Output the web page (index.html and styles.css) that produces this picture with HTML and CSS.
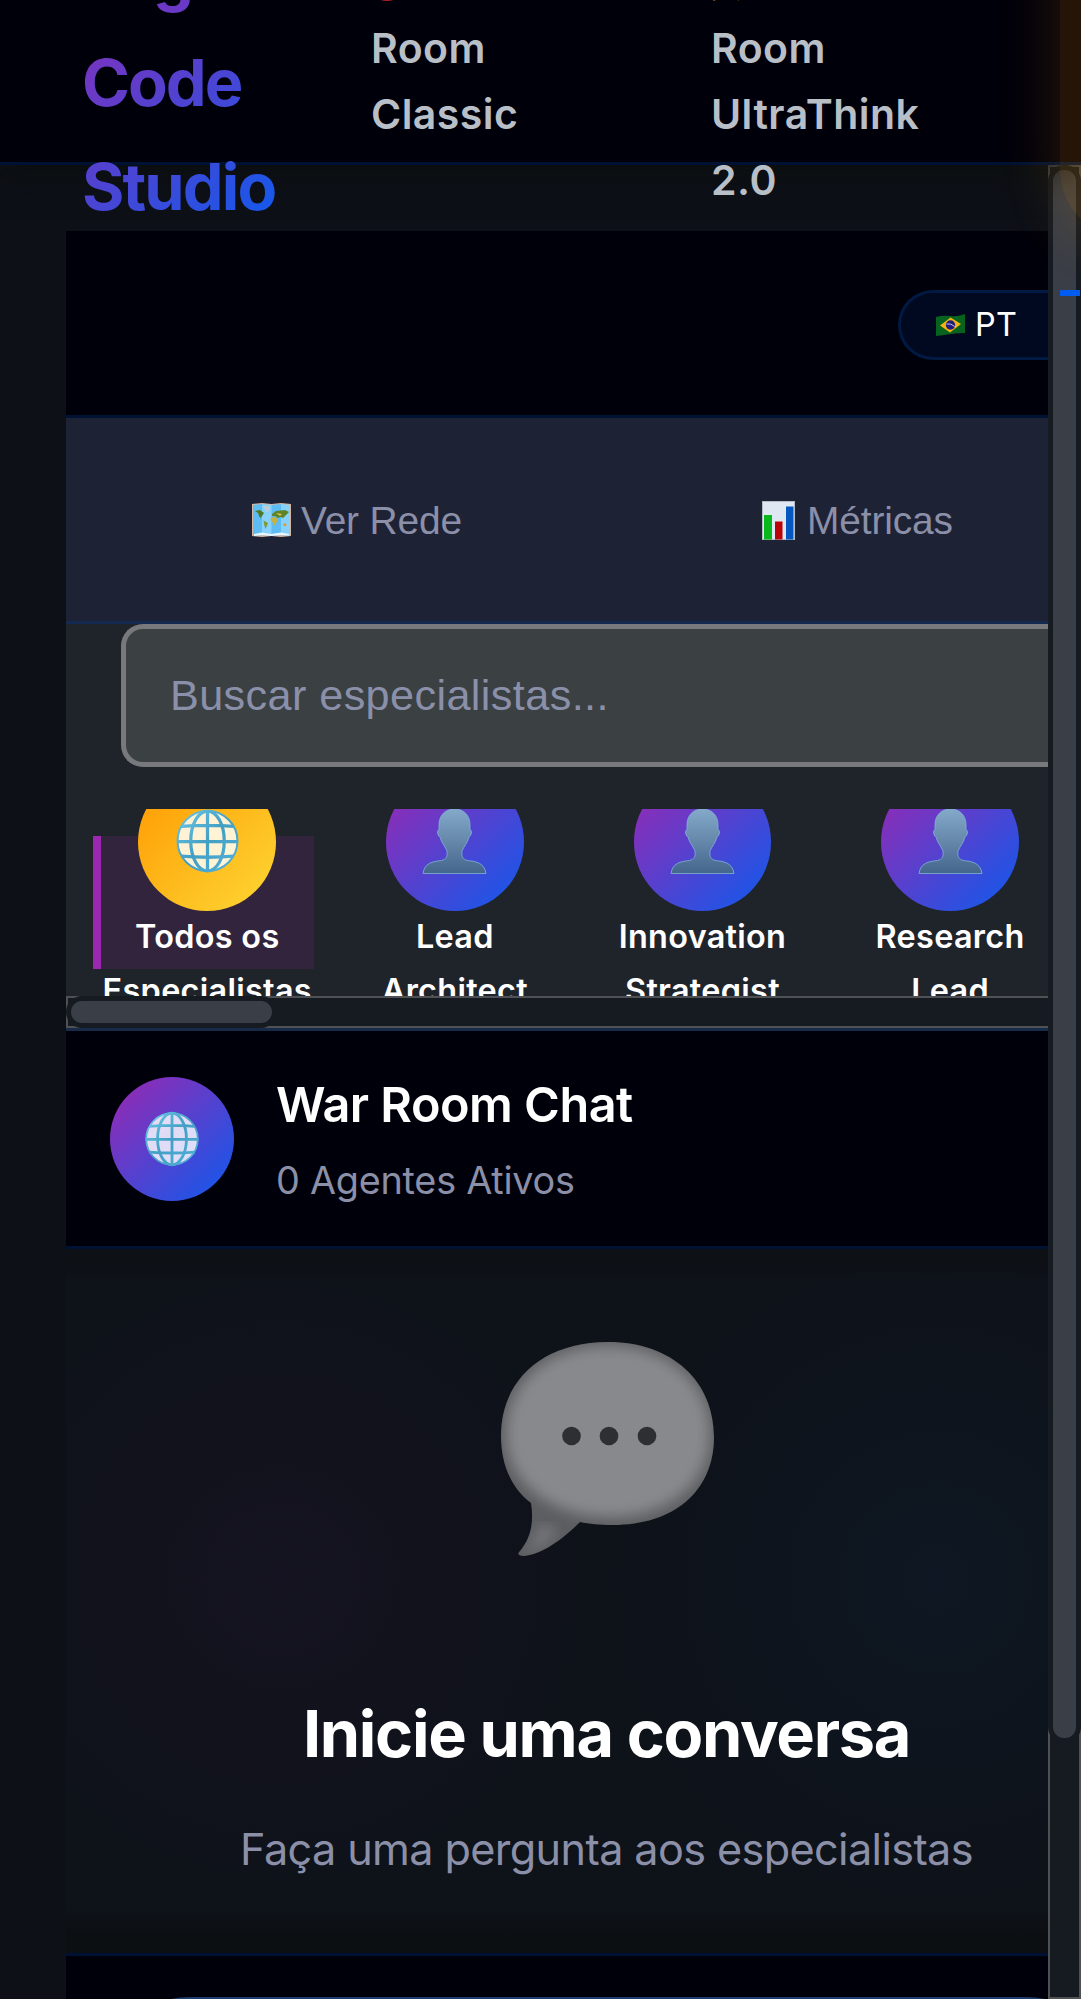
FILE: index.html
```html
<!DOCTYPE html>
<html lang="pt">
<head>
<meta charset="utf-8">
<title>Organic Code Studio</title>
<link rel="stylesheet" href="styles.css">
</head>
<body>
<svg class="defs" width="0" height="0" aria-hidden="true">
  <defs>
    <linearGradient id="wire" gradientUnits="userSpaceOnUse" x1="0" y1="0" x2="64" y2="64">
      <stop offset="0" stop-color="#6fcdec"/><stop offset=".5" stop-color="#429fc4"/><stop offset="1" stop-color="#55b4dc"/>
    </linearGradient>
    <linearGradient id="skin" x1="0" y1="0" x2="0" y2="1">
      <stop offset="0" stop-color="#84a9c9"/><stop offset="1" stop-color="#45668c"/>
    </linearGradient>
    <symbol id="globe" viewBox="0 0 64 64">
      <circle cx="32" cy="32" r="30" fill="#fff" fill-opacity=".82"/>
      <g fill="none" stroke="url(#wire)" stroke-width="3.200">
        <circle cx="32" cy="32" r="29.500" stroke-width="2"/>
        <ellipse cx="32" cy="32" rx="16.500" ry="29.500"/>
        <path d="M32 2V62M6 17.500Q32 15.500 58 17.500M2 32.500H62M6 47Q32 49 58 47"/>
      </g>
    </symbol>
    <symbol id="person" viewBox="0 0 64 66">
      <path d="M32 1C42 1 47.500 8 47.500 17V22C50 22 49 28 46.500 29C45 35 41 39 39.500 43C39 49 40 51 45 52.500C54 53.500 62 55 63.500 65.500H.5C2 55 10 53.500 19 52.500C24 51 25 49 24.500 43C23 39 19 35 17.500 29C15 28 14 22 16.500 22V17C16.500 8 22 1 32 1Z" fill="url(#skin)" stroke="#7fb4d6" stroke-width=".8"/>
    </symbol>
  </defs>
</svg>

<header class="topbar">
  <div class="logo"><span class="logo-first">Organic</span><span>Code</span><span>Studio</span></div>
  <nav class="nav">
    <a class="nav-link nav-classic"><svg class="nav-icon" viewBox="0 0 44 44"><circle cx="22" cy="22" r="20" fill="#b5202a"/></svg> War<br>Room<br>Classic</a>
    <a class="nav-link"><svg class="nav-icon flame" viewBox="0 0 44 44"><path d="M8 42L20 22L34 42L26 36Z" fill="#e07a10"/></svg> War<br>Room<br>UltraThink<br>2.0</a>
  </nav>
</header>

<div class="viewport">
  <main class="content">
    <div class="app">
      <div class="langbar">
        <div class="lang">
          <svg class="flag" viewBox="0 0 29 22">
            <path d="M0 3Q7 1 14 2T29 0V19Q21 19 15 20T0 22Z" fill="#08631f"/>
            <path d="M4 11.500L14.500 3.500L25 10L14 18.500Z" fill="#f5b312"/>
            <circle cx="14.500" cy="11" r="4.700" fill="#231c7c"/>
            <path d="M10.500 10Q15 9 18.800 12.500" fill="none" stroke="#b9c6e6" stroke-width="1"/>
          </svg>
          <span>PT</span>
        </div>
      </div>

      <div class="tabs">
        <div class="tab">
          <svg class="map" viewBox="0 0 39 34">
            <path d="M0 1L10 0L19.500 1L29 0L39 1V33L29 34L19.500 33L10 34L0 33Z" fill="#d2b6a0"/>
            <path d="M1 2L10 1V32L1 33Z" fill="#5cbcf3"/>
            <path d="M10 1L19.500 2V33L10 32Z" fill="#86d2fb"/>
            <path d="M19.500 2L29 1V32L19.500 33Z" fill="#5cbcf3"/>
            <path d="M29 1L38 2V33L29 32Z" fill="#86d2fb"/>
            <path d="M2 31L10 29.500L19 31L29 29.500L37 31V32.500L29 32L19.500 33L10 32L2 33Z" fill="#eaf6fd"/>
            <path d="M11 3L18 3L17 8L14 9Z" fill="#b8cfd9"/>
            <path d="M3 8L8 7L12 10L10 13L8.500 15L11 17L7.500 14L6 10Z" fill="#4f7a23"/>
            <path d="M11.500 17.500L16 20L13.500 26L12.500 23Z" fill="#7f9a35"/>
            <path d="M20 11L24 8L33 7L37 9L34 12L31 15L28.500 14L26 15L23 13L20 13Z" fill="#5d8426"/>
            <path d="M19 14.500L24 14L25.500 17L23 23L21 20L18.500 17Z" fill="#c5b243"/>
            <path d="M24 10L30 11L28 13Z" fill="#dcbf4b"/>
            <path d="M31 21L34 20L34.500 23L31.500 23Z" fill="#e59a35"/>
          </svg>
          <span>Ver Rede</span>
        </div>
        <div class="tab">
          <svg class="bars" viewBox="0 0 33 39">
            <rect width="33" height="39" fill="#b5bcc8"/>
            <rect x="1" y="1" width="31" height="37" fill="#dfe7f2"/>
            <rect x="2" y="14" width="8" height="24.500" fill="#08b81c"/>
            <rect x="13" y="20.500" width="7.500" height="18" fill="#b90508"/>
            <rect x="24" y="5.500" width="7.500" height="33" fill="#0557c0"/>
          </svg>
          <span>Métricas</span>
        </div>
      </div>

      <section class="agents">
        <div class="search">Buscar especialistas...</div>
        <div class="agent-list">
          <div class="agent active"><div class="avatar gold"><svg class="glyph"><use href="#globe"/></svg></div><div class="agent-name">Todos os<br>Especialistas</div></div>
          <div class="agent"><div class="avatar"><svg class="glyph"><use href="#person"/></svg></div><div class="agent-name">Lead<br>Architect</div></div>
          <div class="agent"><div class="avatar"><svg class="glyph"><use href="#person"/></svg></div><div class="agent-name">Innovation<br>Strategist</div></div>
          <div class="agent"><div class="avatar"><svg class="glyph"><use href="#person"/></svg></div><div class="agent-name">Research<br>Lead</div></div>
        </div>
        <div class="hscroll"><div class="hthumb"></div></div>
      </section>

      <div class="chat-head">
        <div class="chat-avatar"><svg class="chat-globe"><use href="#globe"/></svg></div>
        <div class="chat-titles">
          <div class="chat-title">War Room Chat</div>
          <div class="chat-sub">0 Agentes Ativos</div>
        </div>
      </div>

      <section class="empty">
        <svg class="bubble" viewBox="0 0 214 214">
          <defs>
            <filter id="soft" x="-10%" y="-10%" width="120%" height="120%"><feGaussianBlur stdDeviation="7"/></filter>
            <clipPath id="balloon"><path d="M107 0C172 0 213 40 213 95C213 150 172 183 112 183C98 183 88 182 79 180C62 197 42 212 23 214C17 214 16 212 19 209C30 196 33 180 30 161C10 146 0 122 0 94C0 38 42 0 107 0Z"/></clipPath>
          </defs>
          <g clip-path="url(#balloon)">
            <rect width="214" height="214" fill="#5c5d60"/>
            <path d="M107 4C168 4 209 42 209 92C209 142 166 175 110 175C50 175 5 140 5 92C5 42 46 4 107 4Z" fill="#88898c" filter="url(#soft)"/>
            <path d="M22 212Q40 194 38 182L56 188Q40 208 22 212Z" fill="#7c7c82" filter="url(#soft)"/>
          </g>
          <g fill="#2d2f32"><circle cx="70.500" cy="94" r="9.300"/><circle cx="108" cy="94" r="9.300"/><circle cx="146" cy="94" r="9.300"/></g>
        </svg>
        <h2 class="empty-title">Inicie uma conversa</h2>
        <p class="empty-text">Faça uma pergunta aos especialistas</p>
      </section>

      <div class="composer"><div class="composer-box"></div></div>
    </div>
  </main>
  <div class="vscroll"><div class="vthumb"></div></div>
</div>
<div class="orb"></div>
<div class="marker"></div>
</body>
</html>
```

FILE: styles.css
```css
* { box-sizing: border-box; }

html { overflow: hidden; }

body {
  margin: 0;
  position: relative;
  width: 1081px;
  height: 1999px;
  overflow: hidden;
  background: #0d1017;
  color: #fff;
  font-family: Inter, "Liberation Sans", sans-serif;
}

.defs { position: absolute; }

/* Top bar */
.topbar {
  position: relative;
  z-index: 2;
  display: flex;
  align-items: center;
  height: 165px;
  padding-left: 82px;
  background: #00000a;
  border-bottom: 3px solid #001233;
  box-shadow: 0 8px 32px rgba(10, 14, 12, .7);
}

.logo {
  flex: none;
  width: 195px;
  font-size: 64.8px;
  line-height: 103.7px;
  font-weight: 700;
  letter-spacing: -1.9px;
  background: linear-gradient(135deg, #9c27b0, #0d5bee);
  -webkit-background-clip: text;
  background-clip: text;
  color: transparent;
}
.logo span { display: block; }
.logo .logo-first { height: 107px; }

.nav {
  display: flex;
  align-items: flex-start;
  margin: 2px 0 0 94px;
}
.nav-link {
  flex: none;
  color: #b8bfc7;
  font-size: 41px;
  line-height: 65.7px;
  font-weight: 600;
  letter-spacing: .45px;
}
.nav-classic { width: 340px; }
.nav-icon { width: 44px; height: 44px; vertical-align: -5px; margin-left: -6px; }

/* Scrolled page */
.viewport {
  display: flex;
  height: 1834px;
}
.content {
  width: 1048px;
  padding: 66px 0 0 66px;
  overflow: hidden;
}
.app { width: 982px; }

.langbar {
  display: flex;
  justify-content: flex-end;
  align-items: center;
  height: 187px;
  padding-top: 3px;
  background: #00000a;
  border-bottom: 3px solid #001233;
}
.lang {
  display: flex;
  align-items: center;
  gap: 10px;
  width: 150px;
  height: 70px;
  padding-left: 35px;
  border: 3px solid #001a44;
  border-right: 0;
  border-radius: 35px 0 0 35px;
  background: #000920;
  font-size: 32.4px;
  letter-spacing: .4px;
}
.flag { width: 29px; height: 22px; }

.tabs {
  display: flex;
  height: 206px;
  padding-top: 1px;
  background: #1e2235;
  border-bottom: 3px solid #152a50;
  color: #8b90a8;
  font: 38.9px "Liberation Sans", Arial, sans-serif;
  letter-spacing: -.15px;
}
.tab {
  display: flex;
  flex: none;
  align-items: center;
  width: 501px;
  padding-left: 186px;
}
.tab + .tab { padding-left: 195px; }
.tab span { padding-top: 1px; }
.map { width: 39px; height: 34px; margin-right: 10px; }
.bars { width: 33px; height: 39px; margin-right: 12px; }

.agents {
  display: flex;
  flex-direction: column;
  height: 407px;
  background: #1f242b;
  border-bottom: 3px solid #172a48;
}
.search {
  flex: none;
  display: flex;
  align-items: center;
  height: 143px;
  margin-left: 55px;
  padding-left: 44px;
  border: 5px solid #77797d;
  border-right: 0;
  border-radius: 22px 0 0 22px;
  background: #3b4043;
  color: #8b90aa;
  font: 43.2px "Liberation Sans", Arial, sans-serif;
  letter-spacing: .4px;
}
.agent-list {
  flex: none;
  display: flex;
  gap: 27px;
  height: 187px;
  margin-top: 42px;
  padding: 27px 0 0 27px;
  overflow: hidden;
}
.agent {
  flex: none;
  display: flex;
  flex-direction: column;
  align-items: center;
  width: 220.6px;
  height: 132.5px;
  border-left: 8px solid transparent;
}
.agent.active {
  background: #32243d;
  border-left-color: #9c27b0;
}
.avatar {
  flex: none;
  display: flex;
  align-items: center;
  justify-content: center;
  width: 137.700px;
  height: 137.700px;
  margin-top: -63px;
  border-radius: 50%;
  background: linear-gradient(135deg, #9c27b0, #0d5bee);
}
.avatar.gold { background: linear-gradient(135deg, #ff9800, #fdd835); }
.glyph { width: 65px; height: 66px; margin-top: -2px; }
.agent-name {
  margin-top: -1px;
  font-size: 32.400px;
  line-height: 54.700px;
  font-weight: 600;
  letter-spacing: .3px;
  text-align: center;
  white-space: nowrap;
}

.hscroll {
  flex: none;
  height: 32px;
  background: #161b22;
  border: 2.700px solid #4f5154;
  border-right: 0;
}
.hthumb {
  width: 211px;
  height: 32px;
  margin: -2px 0 0 -2px;
  border: 5px solid #161b22;
  border-radius: 16px;
  background: #3a3e46;
}

.chat-head {
  display: flex;
  align-items: center;
  gap: 42px;
  height: 218px;
  padding-left: 44px;
  background: #00000a;
  border-bottom: 3px solid #001233;
}
.chat-avatar {
  display: flex;
  align-items: center;
  justify-content: center;
  width: 124px;
  height: 124px;
  border-radius: 50%;
  background: linear-gradient(135deg, #9c27b0, #0d5bee);
}
.chat-globe { width: 56px; height: 56px; }
.chat-title {
  font-size: 48.6px;
  line-height: 77px;
  font-weight: 600;
  letter-spacing: -.5px;
}
.chat-sub {
  margin-top: 7px;
  color: #8b90a8;
  font-size: 37.800px;
  line-height: 60.500px;
  letter-spacing: -.25px;
}

.empty {
  display: flex;
  flex-direction: column;
  align-items: center;
  height: 704px;
  padding: 93px 0 0 99px;
  background:
    linear-gradient(180deg, #0c1014, transparent 32px, transparent 660px, #0b0f12 690px),
    radial-gradient(circle at 215px 330px, rgba(156, 39, 176, .05), transparent 310px),
    radial-gradient(circle at 870px 330px, rgba(6, 100, 180, .06), transparent 330px),
    #0e1219;
}
.bubble { width: 214px; height: 214px; margin-left: 2px; }
.empty-title {
  margin: 126px 0 0;
  font-size: 64.800px;
  line-height: 103.700px;
  font-weight: 700;
  letter-spacing: -1.3px;
  white-space: nowrap;
}
.empty-text {
  margin: 29px 0 0;
  color: #8b90a8;
  font-size: 43.200px;
  line-height: 69px;
  letter-spacing: -.62px;
  white-space: nowrap;
}

.composer {
  height: 200px;
  padding: 41px 0 0 57px;
  background: #00000a;
  border-top: 3px solid #001233;
}
.composer-box {
  width: 970px;
  height: 140px;
  border: 3px solid #1e3a6e;
  border-radius: 65px;
  background: #00000a;
}

.vscroll {
  width: 33px;
  height: 1834px;
  background: #161b22;
  border: 2.700px solid #4f5154;
}
.vthumb {
  width: 33px;
  height: 1578px;
  margin: -2px 0 0 -2px;
  border: 5px solid #161b22;
  border-radius: 16px;
  background: #3a3e46;
}

/* Floating decoration at the right edge */
.orb {
  position: absolute;
  z-index: 3;
  top: -120px;
  left: 1060px;
  width: 160px;
  height: 358px;
  border-radius: 68px;
  background: rgba(255, 152, 0, .14);
  box-shadow: 0 0 60px rgba(255, 152, 0, .18);
}
.marker {
  position: absolute;
  z-index: 4;
  top: 290px;
  left: 1060px;
  width: 20px;
  height: 6px;
  background: #005cf0;
}
```
